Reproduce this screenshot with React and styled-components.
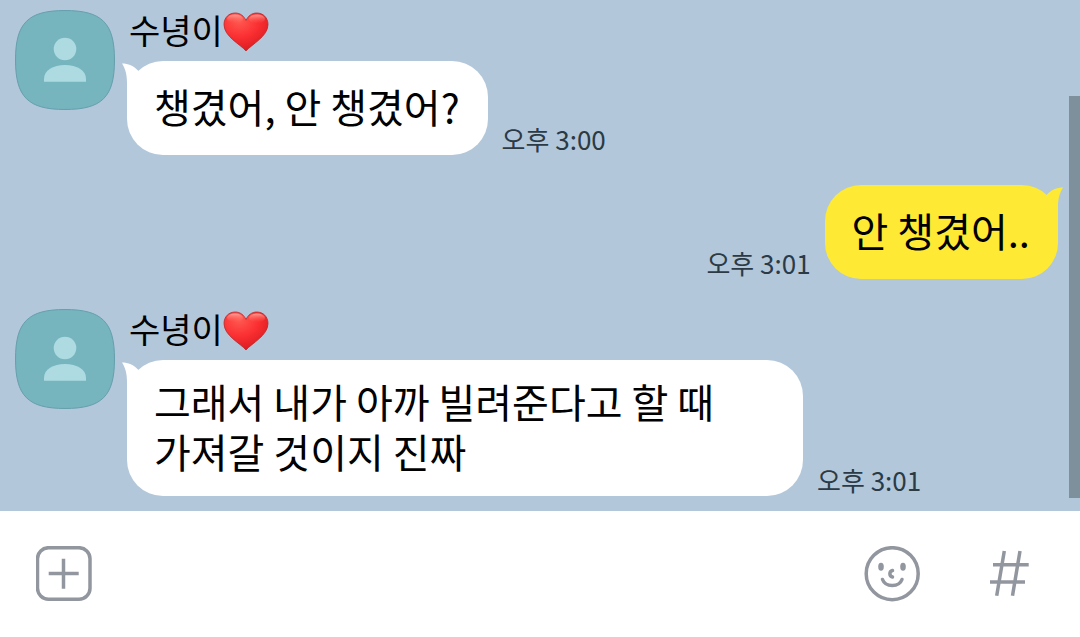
import React from 'react';
import styled, { createGlobalStyle } from 'styled-components';

const GlobalStyle = createGlobalStyle`
  * {
    box-sizing: border-box;
  }

  body {
    margin: 0;
    color: #000;
    background-color: #fff;
    font-family: 'Noto Sans CJK KR', 'Noto Sans', sans-serif;
  }
`;

const Page = styled.div`
  display: flex;
  flex-direction: column;
  min-height: 100vh;
`;

const Chat = styled.main`
  position: relative;
  display: flex;
  flex-direction: column;
  flex: 1;
  gap: 30px;
  padding: 10px 22px 15px 15px;
  background-color: #b2c7da;
`;

const ScrollThumb = styled.div`
  position: absolute;
  top: 96px;
  right: 0;
  bottom: 13px;
  width: 11px;
  background-color: #7f909d;
`;

const MessageRow = styled.article`
  display: flex;
  align-items: flex-start;
  justify-content: ${({ $mine }) => ($mine ? 'flex-end' : 'flex-start')};
  gap: 12px;
`;

const AvatarIcon = styled.svg`
  flex: none;
  width: 100px;
  height: 100px;
`;

const MessageBody = styled.div`
  min-width: 0;
`;

const Sender = styled.div`
  display: flex;
  align-items: center;
  height: 44px;
  margin-bottom: 7px;
  padding-left: 2px;
`;

const SenderName = styled.span`
  padding-bottom: 4px;
  font-size: 34px;
  line-height: 40px;
`;

const HeartIcon = styled.svg`
  width: 46px;
  height: 40px;
`;

const BubbleLine = styled.div`
  display: flex;
  flex-direction: ${({ $mine }) => ($mine ? 'row-reverse' : 'row')};
  align-items: flex-end;
  gap: 14px;
`;

const Bubble = styled.div`
  position: relative;
  display: flex;
  align-items: center;
  max-width: 676px;
  min-height: 94px;
  padding: 16px 28px 20px 27px;
  border-radius: 36px;
  color: #000;
  background-color: ${({ $mine }) => ($mine ? '#fee934' : '#fff')};
`;

const BubbleText = styled.p`
  margin: 0;
  font-size: 40px;
  line-height: 50px;
  word-break: keep-all;
`;

const Tail = styled.svg`
  position: absolute;
  top: 2px;
  ${({ $mine }) => ($mine ? 'right: -5px; transform: scaleX(-1);' : 'left: -5px;')}
  width: 24px;
  height: 34px;
  fill: ${({ $mine }) => ($mine ? '#fee934' : '#fff')};
`;

const Time = styled.time`
  flex: none;
  color: #2b3a45;
  font-size: 26px;
  line-height: 32px;
  white-space: nowrap;
`;

const Composer = styled.form`
  display: flex;
  align-items: center;
  gap: 61px;
  height: 126px;
  padding: 0 43px 0 36px;
  background-color: #fff;
`;

const MessageInput = styled.input`
  flex: 1;
  min-width: 0;
  height: 56px;
  padding: 0;
  border: 0;
  outline: 0;
  background: transparent;
  font-family: inherit;
  font-size: 34px;
`;

const IconButton = styled.button`
  flex: none;
  width: 56px;
  height: 56px;
  padding: 0;
  border: 0;
  background: transparent;
  color: #92969e;
  cursor: pointer;

  svg {
    display: block;
    fill: none;
    stroke: currentColor;
    stroke-width: 3.5;
  }
`;

const messages = [
  { id: 1, sender: '수녕이', text: '챙겼어, 안 챙겼어?', time: '오후 3:00' },
  { id: 2, mine: true, text: '안 챙겼어..', time: '오후 3:01' },
  { id: 3, sender: '수녕이', text: '그래서 내가 아까 빌려준다고 할 때 가져갈 것이지 진짜', time: '오후 3:01' }
];

function Avatar() {
  return (
    <AvatarIcon viewBox="0 0 100 100" aria-hidden="true">
      <path
        d="M50 .5C87 .5 99.5 13 99.5 50S87 99.5 50 99.5.5 87 .5 50 13 .5 50 .5Z"
        fill="#76b4be"
        stroke="#669fad"
      />
      <circle cx="50" cy="39" r="11.3" fill="#addbe1" />
      <path d="M29 71.7v-3C29 60.5 38 55 50 55s21 5.5 21 13.7v3Z" fill="#addbe1" />
    </AvatarIcon>
  );
}

function Heart() {
  return (
    <HeartIcon viewBox="0 0 46 40" role="img" aria-label="❤️">
      <defs>
        <radialGradient id="heartFill" cx="0.35" cy="0.2" r="0.85">
          <stop offset="0" stopColor="#ff5a52" />
          <stop offset="0.5" stopColor="#fb3032" />
          <stop offset="1" stopColor="#d81a20" />
        </radialGradient>
        <linearGradient id="heartShine" x1="0" y1="0" x2="0" y2="1">
          <stop offset="0" stopColor="#ffb5aa" stopOpacity="0.8" />
          <stop offset="1" stopColor="#ff5a52" stopOpacity="0" />
        </linearGradient>
      </defs>
      <path
        d="M23 39C17 32 1 24.5 1 12.5 1 5.5 6 1 12.2 1c5 0 8.8 3 10.8 7.5C25 4 28.8 1 33.8 1 40 1 45 5.5 45 12.5 45 24.5 29 32 23 39Z"
        fill="url(#heartFill)"
        stroke="#b9292c"
        strokeWidth="0.8"
      />
      <ellipse cx="12" cy="7" rx="8" ry="4.5" fill="url(#heartShine)" />
      <ellipse cx="34" cy="7" rx="8" ry="4.5" fill="url(#heartShine)" />
    </HeartIcon>
  );
}

function Message({ sender, text, time, mine }) {
  return (
    <MessageRow $mine={mine}>
      {!mine && <Avatar />}
      <MessageBody>
        {sender && (
          <Sender>
            <SenderName>{sender}</SenderName>
            <Heart />
          </Sender>
        )}
        <BubbleLine $mine={mine}>
          <Bubble $mine={mine}>
            <Tail $mine={mine} viewBox="0 0 24 34" aria-hidden="true">
              <path d="M0 .5C6 .5 12 3 16 7.5L24 16 5 34V20C5 12 3.5 6 0 .5Z" />
            </Tail>
            <BubbleText>{text}</BubbleText>
          </Bubble>
          <Time>{time}</Time>
        </BubbleLine>
      </MessageBody>
    </MessageRow>
  );
}

function App() {
  return (
    <Page>
      <GlobalStyle />
      <Chat>
        {messages.map((message) => (
          <Message key={message.id} {...message} />
        ))}
        <ScrollThumb />
      </Chat>
      <Composer onSubmit={(e) => e.preventDefault()}>
        <IconButton type="button" aria-label="첨부">
          <svg width="56" height="56" viewBox="0 0 56 56">
            <rect x="1.5" y="1.7" width="52.5" height="51.5" rx="11" />
            <path d="M12.7 27.5h30M27.5 12.7v30" />
          </svg>
        </IconButton>
        <MessageInput type="text" aria-label="메시지 입력" />
        <IconButton type="button" aria-label="이모티콘">
          <svg width="56" height="56" viewBox="0 0 56 56" strokeLinecap="round">
            <circle cx="28.2" cy="27.7" r="26" />
            <ellipse cx="17" cy="20.7" rx="2.8" ry="4" fill="currentColor" stroke="none" />
            <ellipse cx="39" cy="20.7" rx="2.8" ry="4" fill="currentColor" stroke="none" />
            <path d="M28.5 24.5C25 25.5 25 30 28.5 31" />
            <path d="M18.5 33.5C21.5 41.5 35 41.5 38 33.5" />
          </svg>
        </IconButton>
        <IconButton type="button" aria-label="샵 검색">
          <svg width="56" height="56" viewBox="0 0 56 56">
            <path d="M23.3 5 15.7 49.7M39 5l-7.5 44.7M12 18.7h35.7M9 36h35" />
          </svg>
        </IconButton>
      </Composer>
    </Page>
  );
}

export default App;
